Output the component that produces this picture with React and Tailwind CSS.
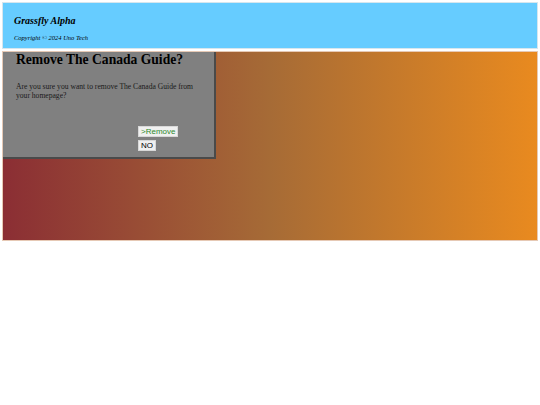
import React from "react";

// Grassfly header + removal confirm dialog over the gradient homepage panel.

const serif = { fontFamily: '"Liberation Serif", "Times New Roman", serif' };
const sans = { fontFamily: '"Liberation Sans", Arial, sans-serif' };

export default function App() {
  return (
    <div className="flex flex-col gap-[2px] p-[2px]" style={serif}>
      <header className="h-[47px] border border-[#d6e6ee] bg-[#66ccff] px-[11px] pt-[11px]">
        <h1 className="text-[10px] font-bold italic leading-[13px] text-black">Grassfly Alpha</h1>
        <p className="mt-[6px] text-[6.5px] italic leading-[9px] text-black">Copyright © 2024 Uno Tech</p>
      </header>

      <main className="relative h-[190px] border border-[#e6c9b5] bg-[linear-gradient(to_right,#8b2e34_0%,#a66b36_50%,#e98a1f_100%)]">
        <div className="absolute left-0 top-0 h-[107px] w-[213px] border-r-2 border-b-2 border-[#4a4a4a] bg-[#808080] pl-[13px] pr-[8px]">
          <h2 className="whitespace-nowrap pt-[1px] text-[13.6px] font-bold leading-[14px] text-black">Remove The Canada Guide?</h2>
          <p className="mt-[15px] text-[7.6px] leading-[9px] text-[#1a1a1a]">
            Are you sure you want to remove The Canada Guide from your homepage?
          </p>
          <div className="mt-[26px] flex flex-col items-start gap-[3px] pl-[122px]">
            <button
              className="h-[11px] border border-[#d8d8d8] bg-[#f0f0f0] px-[2px] text-[8px] leading-[9px] text-[#2e8b2e]"
              style={sans}
            >
              &gt;Remove
            </button>
            <button
              className="h-[11px] border border-[#d8d8d8] bg-[#f0f0f0] px-[2px] text-[8px] leading-[9px] text-black"
              style={sans}
            >
              NO
            </button>
          </div>
        </div>
      </main>
    </div>
  );
}
